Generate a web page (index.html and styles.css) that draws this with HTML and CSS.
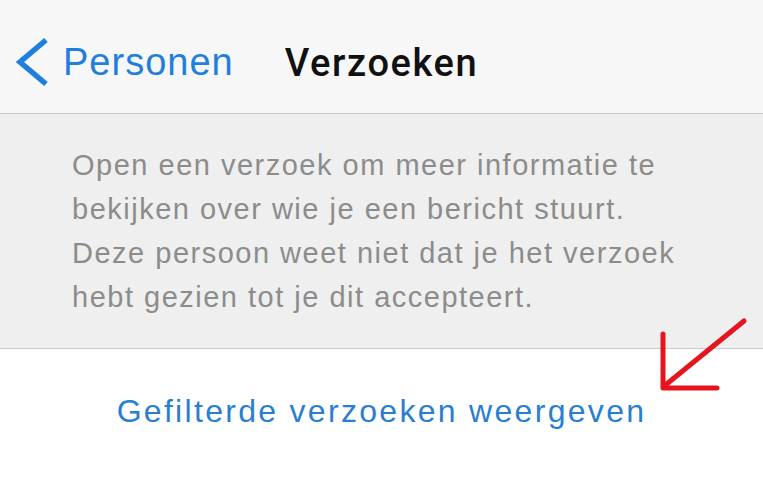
FILE: index.html
```html
<!DOCTYPE html>
<html lang="nl">
<head>
  <meta charset="UTF-8" />
  <title>Verzoeken</title>
  <link rel="stylesheet" href="styles.css">
</head>
<body>
  <header class="navbar">
    <a class="back" href="#">
      <svg class="chevron" width="34" height="50" viewBox="0 0 34 50">
        <path d="M30 3 L4 25 L30 47" fill="none" stroke="#1f7fdf" stroke-width="5.5" stroke-linejoin="miter" stroke-linecap="butt" />
      </svg>
      <span>Personen</span>
    </a>
    <h1>Verzoeken</h1>
    <div></div>
  </header>

  <main>
    <section class="info">
      <p>Open een verzoek om meer informatie te bekijken over wie je een bericht stuurt. Deze persoon weet niet dat je het verzoek hebt gezien tot je dit accepteert.</p>
    </section>

    <section class="filtered">
      <a href="#">Gefilterde verzoeken weergeven</a>
      <svg class="arrow" width="100" height="80" viewBox="0 0 100 80">
        <path d="M89 5 L8 71 M8 18 L8 72 L62 72" fill="none" stroke="#e5141e" stroke-width="5" stroke-linecap="round" stroke-linejoin="round" />
      </svg>
    </section>
  </main>
</body>
</html>
```

FILE: styles.css
```css
* {
  box-sizing: border-box;
  margin: 0;
  padding: 0;
}

body {
  font-family: 'Liberation Sans', Arial, sans-serif;
  background: #fff;
  width: 763px;
  height: 498px;
  overflow: hidden;
}

.navbar {
  height: 114px;
  padding-top: 12px;
  background: #f7f7f7;
  border-bottom: 1px solid #c9c9c9;
  display: grid;
  grid-template-columns: 1fr auto 1fr;
  align-items: center;
}

.back {
  display: flex;
  align-items: center;
  gap: 13px;
  padding-left: 16px;
  color: #1f7fdf;
  text-decoration: none;
  font-size: 38px;
  letter-spacing: 1px;
}

.back .chevron {
  margin-top: -2px;
}

.navbar h1 {
  font-family: 'Roboto', 'Liberation Sans', sans-serif;
  font-size: 38px;
  font-weight: 500;
  letter-spacing: 1.6px;
  color: #111;
}

.info {
  background: #efefef;
  padding: 29px 60px 29px 72px;
  border-bottom: 1px solid #c9c9c9;
}

.info p {
  font-size: 29px;
  line-height: 44px;
  color: #8c8c8c;
  letter-spacing: 1.5px;
}

.filtered {
  position: relative;
  padding-top: 40px;
  text-align: center;
}

.filtered a {
  font-size: 32px;
  line-height: 44px;
  color: #2a7ed2;
  text-decoration: none;
  letter-spacing: 2.3px;
}

.filtered .arrow {
  position: absolute;
  left: 655px;
  top: -33px;
}
```
